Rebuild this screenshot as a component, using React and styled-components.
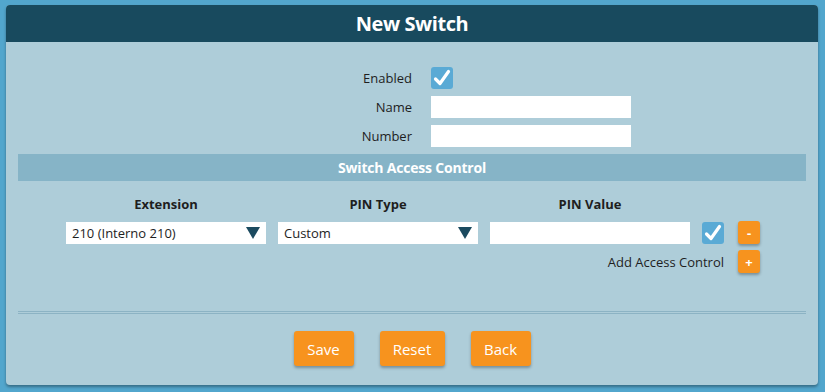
import styled, { createGlobalStyle } from "styled-components";

const GlobalStyle = createGlobalStyle`
  html, body {
    margin: 0;
    padding: 0;
    background: #52a6cd;
    font-family: "Open Sans", "Liberation Sans", sans-serif;
    color: #1e1e1e;
  }
`;

const Page = styled.div`
  width: 825px;
  height: 392px;
  padding: 5px 7px 0 6px;
  box-sizing: border-box;
`;

const Panel = styled.div`
  background: #aecdd9;
  border-radius: 4px;
  box-shadow: 0 2px 3px rgba(0, 0, 0, 0.35);
  overflow: hidden;
  padding-bottom: 19px;
`;

const Header = styled.div`
  background: #184a5e;
  color: #fff;
  height: 37px;
  display: flex;
  align-items: center;
  justify-content: center;
  font-size: 20px;
  font-weight: 700;
  letter-spacing: -0.4px;
`;

const Body = styled.div`
  padding: 25px 12px 0 12px;
`;

const FormGrid = styled.div`
  display: grid;
  grid-template-columns: 1fr 1fr;
  row-gap: 7px;
  align-items: center;
`;

const Label = styled.div`
  text-align: right;
  font-size: 13px;
`;

const Cell = styled.div`
  padding-left: 19px;
  display: flex;
  align-items: center;
`;

const TextInput = styled.div`
  width: ${(p) => p.$w || 200}px;
  height: 22px;
  background: #fff;
`;

const CheckBox = styled.div`
  width: 22px;
  height: 22px;
  border-radius: 3px;
  background: #5aaad5;
  display: flex;
  align-items: center;
  justify-content: center;
`;

const SectionBar = styled.div`
  margin-top: 7px;
  height: 27px;
  background: #86b4c7;
  color: #fff;
  font-size: 14px;
  font-weight: 700;
  display: flex;
  align-items: center;
  justify-content: center;
  letter-spacing: -0.2px;
`;

const AccessGrid = styled.div`
  display: grid;
  grid-template-columns: 200px 200px 200px 22px 22px;
  column-gap: 12px;
  justify-content: center;
  align-items: center;
  margin-top: 14px;
`;

const ColHead = styled.div`
  text-align: center;
  font-size: 13px;
  font-weight: 700;
  height: 18px;
  margin-bottom: 8px;
`;

const Select = styled.div`
  height: 22px;
  background: #fff;
  display: flex;
  align-items: center;
  justify-content: space-between;
  padding: 0 6px;
  font-size: 13px;
`;

const Arrow = styled.span`
  width: 0;
  height: 0;
  border-left: 7px solid transparent;
  border-right: 7px solid transparent;
  border-top: 12px solid #1b4a5f;
`;

const SmallBtn = styled.div`
  width: 22px;
  height: 23px;
  border-radius: 3px;
  background: #f7931e;
  color: #fff;
  font-weight: 700;
  font-size: 13px;
  display: flex;
  align-items: center;
  justify-content: center;
  box-shadow: 0 2px 3px rgba(0, 0, 0, 0.3);
  margin-left: 2px;
  margin-top: ${(p) => p.$top || 0}px;
`;

const AddLabel = styled.div`
  grid-column: 1 / 5;
  text-align: right;
  font-size: 13px;
  margin-top: 6px;
`;

const Separator = styled.div`
  margin-top: 38px;
  height: 1px;
  border-top: 1px solid #8cb3c4;
  border-bottom: 1px solid #8cb3c4;
`;

const Buttons = styled.div`
  display: flex;
  justify-content: center;
  gap: 26px;
  margin-top: 17px;
`;

const Button = styled.div`
  width: ${(p) => p.$w}px;
  height: 35px;
  border-radius: 3px;
  background: #f7931e;
  color: #fff;
  font-size: 15px;
  display: flex;
  align-items: center;
  justify-content: center;
  box-shadow: 0 2px 3px rgba(0, 0, 0, 0.3);
`;

const Check = () => (
  <svg width="18" height="18" viewBox="0 0 18 18">
    <path d="M2.5 10 L7 14.5 L15.5 2.5" fill="none" stroke="#fff" strokeWidth="3.2" strokeLinecap="round" strokeLinejoin="round" />
  </svg>
);

export default function App() {
  return (
    <Page>
      <GlobalStyle />
      <Panel>
        <Header>New Switch</Header>
        <Body>
          <FormGrid>
            <Label>Enabled</Label>
            <Cell>
              <CheckBox>
                <Check />
              </CheckBox>
            </Cell>
            <Label>Name</Label>
            <Cell>
              <TextInput />
            </Cell>
            <Label>Number</Label>
            <Cell>
              <TextInput />
            </Cell>
          </FormGrid>
          <SectionBar>Switch Access Control</SectionBar>
          <AccessGrid>
            <ColHead>Extension</ColHead>
            <ColHead>PIN Type</ColHead>
            <ColHead>PIN Value</ColHead>
            <div />
            <div />
            <Select>
              210 (Interno 210)
              <Arrow />
            </Select>
            <Select>
              Custom
              <Arrow />
            </Select>
            <TextInput />
            <CheckBox>
              <Check />
            </CheckBox>
            <SmallBtn>-</SmallBtn>
            <AddLabel>Add Access Control</AddLabel>
            <SmallBtn $top={6}>+</SmallBtn>
          </AccessGrid>
          <Separator />
          <Buttons>
            <Button $w={60}>Save</Button>
            <Button $w={65}>Reset</Button>
            <Button $w={60}>Back</Button>
          </Buttons>
        </Body>
      </Panel>
    </Page>
  );
}
